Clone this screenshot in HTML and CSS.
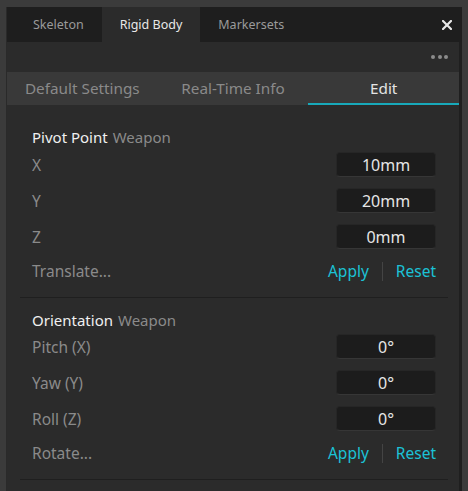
FILE: index.html
```html
<!DOCTYPE html>
<html>
<head>
<meta charset="utf-8">
<link rel="stylesheet" href="styles.css">
</head>
<body>
<div class="window">
  <div class="tabbar">
    <div class="tab">Skeleton</div>
    <div class="tab active">Rigid Body</div>
    <div class="tab">Markersets</div>
    <div class="close">
      <svg width="10" height="10" viewBox="0 0 10 10"><path d="M1 1 L9 9 M9 1 L1 9" stroke="#e8e8e8" stroke-width="2.2" stroke-linecap="square"/></svg>
    </div>
  </div>
  <div class="body">
    <div class="main">
      <div class="toolbar">
        <div class="dots"><span></span><span></span><span></span></div>
      </div>
      <div class="subtabs">
        <div class="subtab">Default Settings</div>
        <div class="subtab">Real-Time Info</div>
        <div class="subtab active">Edit</div>
      </div>
      <div class="content">
        <div class="section first">
          <div class="header"><span class="title">Pivot Point</span><span class="sub">Weapon</span></div>
          <div class="row"><span class="label">X</span><div class="field">10mm</div></div>
          <div class="row"><span class="label">Y</span><div class="field">20mm</div></div>
          <div class="row"><span class="label">Z</span><div class="field">0mm</div></div>
          <div class="actions"><span class="label">Translate...</span>
            <div class="links"><span class="link">Apply</span><span class="sep"></span><span class="link">Reset</span></div>
          </div>
        </div>
        <div class="section">
          <div class="header"><span class="title">Orientation</span><span class="sub">Weapon</span></div>
          <div class="row"><span class="label">Pitch (X)</span><div class="field">0°</div></div>
          <div class="row"><span class="label">Yaw (Y)</span><div class="field">0°</div></div>
          <div class="row"><span class="label">Roll (Z)</span><div class="field">0°</div></div>
          <div class="actions"><span class="label">Rotate...</span>
            <div class="links"><span class="link">Apply</span><span class="sep"></span><span class="link">Reset</span></div>
          </div>
        </div>
      </div>
    </div>
    <div class="scrollbar"></div>
  </div>
</div>
</body>
</html>
```

FILE: styles.css
```css
html, body {
  margin: 0;
  padding: 0;
  background: #3b3b3b;
  height: 491px;
  overflow: hidden;
}
body {
  padding: 7px 6px 0 6px;
  box-sizing: border-box;
  font-family: "Noto Sans", "Open Sans", sans-serif;
}
.window {
  border-left: 1px solid #2a2a2a;
  height: 484px;
  display: flex;
  flex-direction: column;
}
.tabbar {
  height: 35px;
  background: #1e1e1e;
  display: flex;
  align-items: stretch;
  padding-left: 8px;
}
.tab {
  padding: 0 18px;
  display: flex;
  align-items: center;
  font-size: 12.5px;
  color: #9a9a9a;
}
.tab.active {
  background: #2b2b2b;
  color: #e8e8e8;
}
.close {
  margin-left: auto;
  margin-right: 10px;
  display: flex;
  align-items: center;
}
.close svg { display: block; }
.body {
  flex: 1;
  display: flex;
}
.main {
  flex: 1;
  background: #2b2b2b;
  display: flex;
  flex-direction: column;
}
.scrollbar {
  width: 3px;
  background: #1f1f1f;
}
.toolbar {
  height: 30px;
  display: flex;
  align-items: center;
  justify-content: flex-end;
  padding-right: 11px;
}
.dots {
  display: flex;
  gap: 2.5px;
}
.dots span {
  width: 4px;
  height: 4px;
  border-radius: 50%;
  background: #8c8c8c;
}
.subtabs {
  height: 33px;
  display: grid;
  grid-template-columns: 1fr 1fr 1fr;
  background: #393939;
}
.subtab {
  display: flex;
  align-items: center;
  justify-content: center;
  font-size: 15.3px;
  color: #8a8a8a;
  border-bottom: 2px solid transparent;
  padding-top: 1px;
}
.subtab.active {
  color: #e4e4e4;
  border-bottom-color: #18a9ba;
}
.content {
  padding: 10px 11px 0 13px;
}
.section {
  padding: 12px 12px 15px 12px;
  border-bottom: 1px solid #1f1f1f;
}
.header {
  height: 20px;
  display: flex;
  align-items: center;
  gap: 5px;
  font-size: 15px;
  margin-bottom: 4px;
}
.section.first .header { margin-bottom: 5px; }
.title { color: #f0f0f0; }
.sub { color: #8a8a8a; }
.row {
  height: 25px;
  margin-bottom: 11px;
  display: flex;
  align-items: center;
  justify-content: space-between;
}
.label {
  font-size: 15.5px;
  color: #8a8a8a;
}
.field {
  width: 100px;
  height: 25px;
  box-sizing: border-box;
  background: #1c1c1c;
  border: 1px solid #262626;
  border-bottom-color: #363636;
  border-radius: 4px;
  display: flex;
  align-items: center;
  justify-content: center;
  font-size: 16px;
  color: #e6e6e6;
}
.actions {
  height: 22px;
  display: flex;
  align-items: center;
  justify-content: space-between;
}
.links {
  display: flex;
  align-items: center;
}
.link {
  font-size: 15.5px;
  color: #1bc2d6;
}
.sep {
  width: 1px;
  height: 19px;
  background: #444;
  margin: 0 13px;
}
```
